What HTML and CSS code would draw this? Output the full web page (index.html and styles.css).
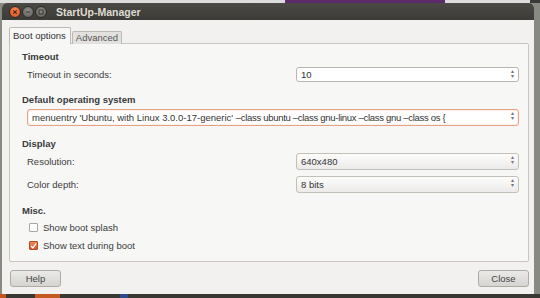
FILE: index.html
```html
<!DOCTYPE html>
<html lang="en">
<head>
  <meta charset="UTF-8">
  <title>StartUp-Manager</title>
  <link rel="stylesheet" href="styles.css">
</head>
<body>

<div class="window">
  <div class="titlebar">
    <span class="wbtn close-btn">
      <svg width="10" height="10" viewBox="0 0 10 10"><path d="M3.3 3.3 L6.7 6.7 M6.7 3.3 L3.3 6.7" stroke="#4a2010" stroke-width="1.2"/></svg>
    </span>
    <span class="wbtn">
      <svg width="10" height="10" viewBox="0 0 10 10"><path d="M3 5 H7" stroke="#3a3935" stroke-width="1.2"/></svg>
    </span>
    <span class="wbtn">
      <svg width="10" height="10" viewBox="0 0 10 10"><rect x="3" y="3" width="4" height="4" fill="none" stroke="#3a3935" stroke-width="1"/></svg>
    </span>
    <span class="title">StartUp-Manager</span>
  </div>

  <div class="content">
    <div class="tabs">
      <div class="tab active">Boot options</div>
      <div class="tab">Advanced</div>
    </div>

    <div class="notebook">
      <div class="section first">
        <div class="heading">Timeout</div>
        <div class="rows">
          <div class="row">
            <span class="label">Timeout in seconds:</span>
            <div class="spin">10<span class="arrows">&#9652;<br>&#9662;</span></div>
          </div>
        </div>
      </div>

      <div class="section">
        <div class="heading">Default operating system</div>
        <div class="rows">
          <div class="entry">menuentry 'Ubuntu, with Linux 3.0.0-17-generic' <span class="tail">–class ubuntu –class gnu-linux –class gnu –class os {</span><span class="arrows">&#9652;<br>&#9662;</span></div>
        </div>
      </div>

      <div class="section">
        <div class="heading">Display</div>
        <div class="rows">
          <div class="row">
            <span class="label">Resolution:</span>
            <div class="combo">640x480<span class="arrows">&#9652;<br>&#9662;</span></div>
          </div>
          <div class="row">
            <span class="label">Color depth:</span>
            <div class="combo">8 bits<span class="arrows">&#9652;<br>&#9662;</span></div>
          </div>
        </div>
      </div>

      <div class="section">
        <div class="heading">Misc.</div>
        <div class="rows checks">
          <label class="check"><span class="box"></span>Show boot splash</label>
          <label class="check"><span class="box checked">
            <svg width="8" height="8" viewBox="0 0 8 8"><path d="M1.2 4 L3.2 6.2 L7 1.2" fill="none" stroke="#fff" stroke-width="1.4"/></svg>
          </span>Show text during boot</label>
        </div>
      </div>
    </div>

    <div class="actions">
      <button class="btn">Help</button>
      <button class="btn">Close</button>
    </div>
  </div>
</div>

</body>
</html>
```

FILE: styles.css
```css
body {
  margin: 0;
  height: 298px;
  overflow: hidden;
  font-family: "Liberation Sans", Arial, sans-serif;
  font-size: 9.5px;
  color: #3c3c3c;
  background:
    linear-gradient(to right, #dcdcdc 0 285px, #5d2b6c 285px 445px, #dcdcdc 445px 530px, #3a3a38 530px) top / 100% 3px no-repeat,
    linear-gradient(to right, #c2541e 0 6px, #3a3833 6px 35px, #c25a22 35px 60px, #3a3833 60px 120px, #2e4a8a 120px 128px, #3a3833 128px) bottom / 100% 4px no-repeat,
    #868a80;
  padding: 3px 6px 0 2px;
  box-sizing: border-box;
}

.window {
  height: 291px;
  background-color: #f2f1f0;
  border-radius: 5px 5px 0 0;
  overflow: hidden;
  display: flex;
  flex-direction: column;
}

.titlebar {
  height: 17px;
  background: linear-gradient(#4a4944, #3c3b37);
  display: flex;
  align-items: center;
  padding-left: 7px;
  gap: 1px;
}

.wbtn {
  width: 10px;
  height: 10px;
  border-radius: 50%;
  background: radial-gradient(circle at 50% 35%, #8e8c86, #5f5d58);
  border: 0.5px solid #2c2b28;
  display: flex;
}

.close-btn {
  background: radial-gradient(circle at 50% 35%, #f6895a, #d24a14);
}

.title {
  margin-left: 8px;
  color: #dfdbd2;
  font-weight: bold;
  font-size: 10.5px;
}

.content {
  flex: 1;
  padding: 8px 5px 0 7px;
  display: flex;
  flex-direction: column;
}

.tabs {
  display: flex;
  align-items: flex-end;
  height: 16px;
  position: relative;
  z-index: 1;
  margin-bottom: -1px;
}

.tab {
  height: 12px;
  padding: 0 3px;
  line-height: 12px;
  background-color: #e3e1de;
  color: #555;
  border: 1px solid #bcb9b3;
  border-bottom: none;
  border-radius: 2px 2px 0 0;
  margin-left: 1px;
}

.tab.active {
  height: 16px;
  line-height: 15px;
  background-color: #f7f7f6;
  color: #333;
  margin-left: 0;
  padding: 0 4px 0 3px;
}

.notebook {
  height: 219px;
  box-sizing: border-box;
  background-color: #f7f7f6;
  border: 1px solid #c9c6c0;
  border-radius: 0 2px 2px 2px;
  padding: 7px 0 0 0;
}

.section {
  margin-top: 12px;
}

.section.first {
  margin-top: 0;
}

.heading {
  height: 12px;
  line-height: 12px;
  padding-left: 12px;
  font-weight: bold;
  color: #3a3a3a;
}

.rows {
  padding: 3px 9px 0 17px;
  display: flex;
  flex-direction: column;
  gap: 6px;
}

.row {
  display: grid;
  grid-template-columns: 1fr 223px;
  align-items: center;
}

.spin,
.entry,
.combo {
  position: relative;
  box-sizing: border-box;
  height: 16px;
  line-height: 14px;
  padding-left: 4px;
  border-radius: 3px;
  color: #333;
  white-space: nowrap;
  overflow: hidden;
}

.spin {
  height: 15px;
  margin-top: 1px;
  background-color: #fff;
  border: 1px solid #b9b6b0;
  line-height: 13px;
}

.entry {
  height: 17px;
  line-height: 15px;
  background-color: #fff;
  border: 1px solid #e6a083;
  box-shadow: inset 0 0 2px #f4cdb9;
}

.entry .tail {
  letter-spacing: -0.3px;
}

.combo {
  height: 17px;
  line-height: 15px;
  background: linear-gradient(#fcfcfb, #ecebe9);
  border: 1px solid #c3c0ba;
}

.arrows {
  position: absolute;
  right: 4px;
  top: 1px;
  font-size: 6px;
  line-height: 5px;
  color: #777;
}

.checks {
  padding-top: 1px;
  padding-left: 19px;
  gap: 0;
}

.check {
  height: 18px;
  display: flex;
  align-items: center;
  gap: 5px;
}

.box {
  width: 7px;
  height: 7px;
  border: 1px solid #aaa7a1;
  border-radius: 1px;
  background-color: #fff;
  display: flex;
}

.box.checked {
  background: linear-gradient(#ec8a5c, #d7572a);
  border-color: #b44a20;
}

.actions {
  display: flex;
  justify-content: space-between;
  padding: 8px 0 0 1px;
}

.btn {
  width: 51px;
  height: 17px;
  padding: 0;
  font-family: inherit;
  font-size: 9.5px;
  color: #444;
  background: linear-gradient(#eceae8, #d6d4d1);
  border: 1px solid #aeaba5;
  border-radius: 3px;
}
```
